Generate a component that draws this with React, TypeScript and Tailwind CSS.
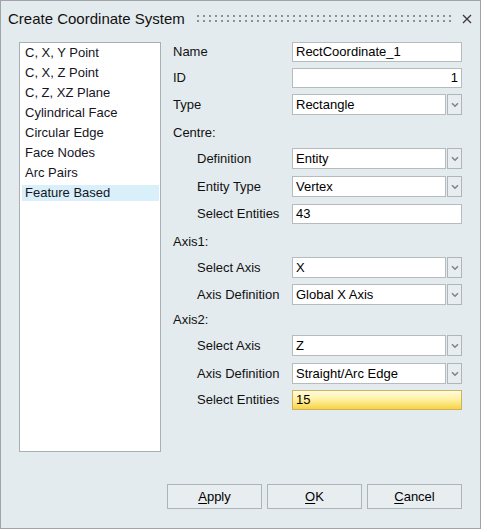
import React from "react";

const font = { fontFamily: '"Liberation Sans", Arial, sans-serif' };

function Chevron() {
  return (
    <svg width="8" height="6" viewBox="0 0 8 6">
      <path d="M1 1.2 L4 4.2 L7 1.2" fill="none" stroke="#80858a" strokeWidth="1.6" />
    </svg>
  );
}

function TextBox({ value, right, h = "h-[20px]" }: { value: string; right?: boolean; h?: string }) {
  return (
    <div
      className={`w-[170px] ${h} border border-[#b6bbbe] bg-white flex items-center px-[3px] text-[13px] text-black ${
        right ? "justify-end" : ""
      }`}
    >
      {value}
    </div>
  );
}

function Select({ value }: { value: string }) {
  return (
    <div className="w-[170px] h-[21px] flex gap-[1px]">
      <div className="w-[154px] h-full border border-[#b6bbbe] bg-white flex items-center px-[3px] text-[13px] text-black">
        {value}
      </div>
      <div className="w-[15px] h-full border border-[#b0b5b8] bg-[#e8edf0] flex items-center justify-center">
        <Chevron />
      </div>
    </div>
  );
}

function Row({
  label,
  sub,
  mt,
  h,
  children,
}: {
  label: string;
  sub?: boolean;
  mt: string;
  h: string;
  children?: React.ReactNode;
}) {
  return (
    <div className={`flex items-center ${mt} ${h}`}>
      <div className={`w-[131px] ${sub ? "pl-[36px]" : "pl-[12px]"} text-[13px] text-[#111] whitespace-nowrap`}>
        {label}
      </div>
      {children}
    </div>
  );
}

const items = [
  "C, X, Y Point",
  "C, X, Z Point",
  "C, Z, XZ Plane",
  "Cylindrical Face",
  "Circular Edge",
  "Face Nodes",
  "Arc Pairs",
  "Feature Based",
];

export default function App() {
  return (
    <div
      className="w-[481px] h-[529px] border border-[#9ea4a8] bg-[#e4ebef] flex flex-col text-[13px] text-black"
      style={font}
    >
      {/* Title bar */}
      <div className="h-[36px] flex items-center pl-[7px] relative">
        <span className="text-[15px] text-[#111] whitespace-nowrap">Create Coordinate System</span>
        <svg className="absolute left-[196px] top-[14px]" width="256" height="8">
          <defs>
            <pattern id="dots" width="6" height="5" patternUnits="userSpaceOnUse">
              <rect x="0" y="0" width="2" height="2" fill="#8b9094" />
            </pattern>
          </defs>
          <rect x="0" y="0" width="256" height="7" fill="url(#dots)" />
        </svg>
        <svg className="absolute left-[461px] top-[13px]" width="10" height="10" viewBox="0 0 10 10">
          <path d="M1 1 L9 9 M9 1 L1 9" stroke="#3a3a3a" strokeWidth="1.3" />
        </svg>
      </div>

      {/* Content */}
      <div className="mt-[5px] flex">
        <div className="ml-[18px] w-[142px] h-[410px] border border-[#a9b0b4] bg-white flex flex-col pl-[2px] pr-[1px]">
          {items.map((it, i) => (
            <div key={it} className="h-[20px] flex items-center">
              <div
                className={`w-full h-[16px] flex items-center pl-[3px] text-[13px] text-[#151525] whitespace-nowrap ${
                  i === items.length - 1 ? "bg-[#d9eff9]" : ""
                }`}
              >
                {it}
              </div>
            </div>
          ))}
        </div>

        <div className="flex flex-col w-[301px]">
          <Row label="Name" mt="mt-0" h="h-[20px]">
            <TextBox value="RectCoordinate_1" />
          </Row>
          <Row label="ID" mt="mt-[6px]" h="h-[20px]">
            <TextBox value="1" right />
          </Row>
          <Row label="Type" mt="mt-[6px]" h="h-[21px]">
            <Select value="Rectangle" />
          </Row>
          <Row label="Centre:" mt="mt-[8px]" h="h-[20px]" />
          <Row label="Definition" sub mt="mt-[5px]" h="h-[21px]">
            <Select value="Entity" />
          </Row>
          <Row label="Entity Type" sub mt="mt-[7px]" h="h-[21px]">
            <Select value="Vertex" />
          </Row>
          <Row label="Select Entities" sub mt="mt-[7px]" h="h-[20px]">
            <TextBox value="43" />
          </Row>
          <Row label="Axis1:" mt="mt-[8px]" h="h-[20px]" />
          <Row label="Select Axis" sub mt="mt-[5px]" h="h-[21px]">
            <Select value="X" />
          </Row>
          <Row label="Axis Definition" sub mt="mt-[6px]" h="h-[21px]">
            <Select value="Global X Axis" />
          </Row>
          <Row label="Axis2:" mt="mt-[5px]" h="h-[20px]" />
          <Row label="Select Axis" sub mt="mt-[5px]" h="h-[21px]">
            <Select value="Z" />
          </Row>
          <Row label="Axis Definition" sub mt="mt-[7px]" h="h-[21px]">
            <Select value="Straight/Arc Edge" />
          </Row>
          <Row label="Select Entities" sub mt="mt-[6px]" h="h-[20px]">
            <div className="w-[170px] h-[20px] border border-[#cdb458] bg-[linear-gradient(to_bottom,#fffbe2,#fff09c_50%,#f6d247)] flex items-center px-[3px] text-[13px] text-black">
              15
            </div>
          </Row>
        </div>
      </div>

      {/* Buttons */}
      <div className="mt-[32px] flex justify-end gap-[5px] pr-[18px]">
        {[
          ["A", "pply"],
          ["O", "K"],
          ["C", "ancel"],
        ].map(([u, rest]) => (
          <div
            key={u + rest}
            className="w-[95px] h-[25px] border border-[#adb3b7] bg-[#e8edf0] flex items-center justify-center text-[13px] text-black"
          >
            <span>
              <span className="underline underline-offset-2">{u}</span>
              {rest}
            </span>
          </div>
        ))}
      </div>
    </div>
  );
}
